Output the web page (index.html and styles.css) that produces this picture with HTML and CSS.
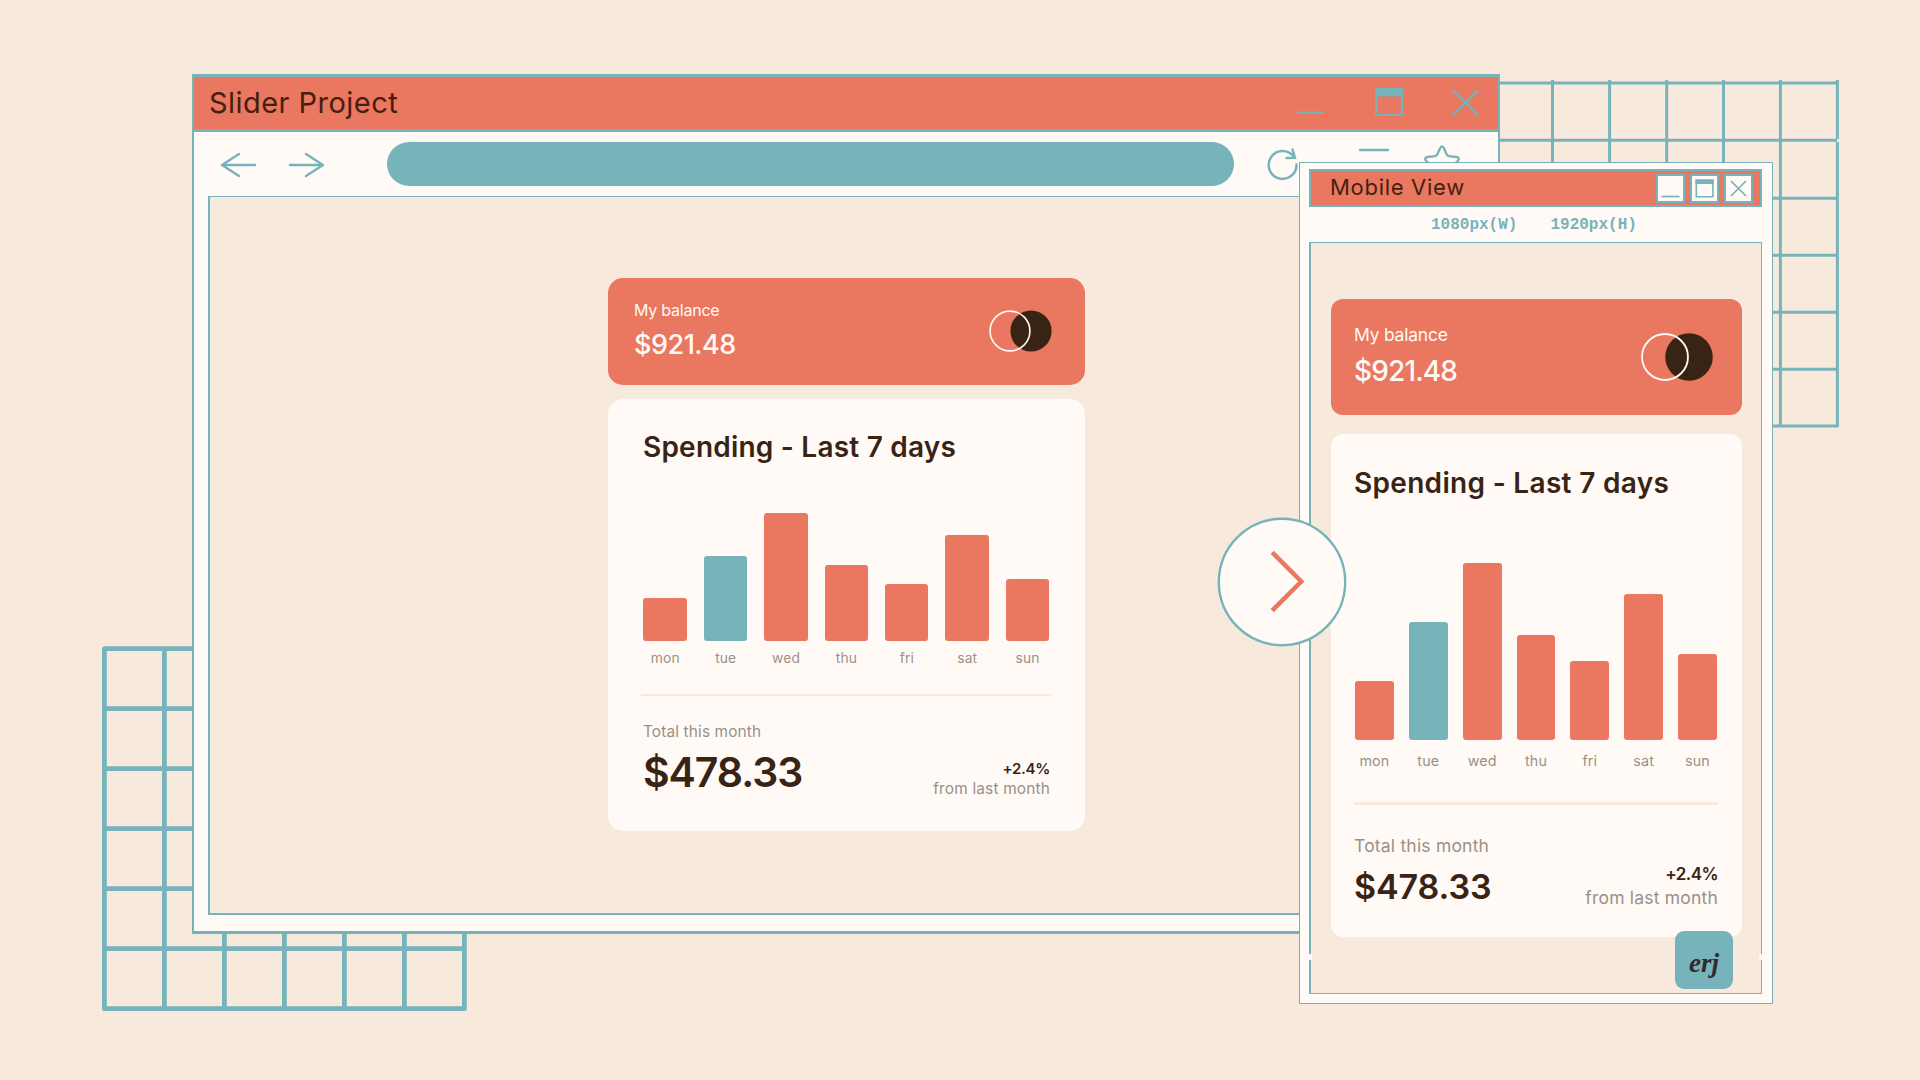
FILE: index.html
```html
<!DOCTYPE html>
<html lang="en">
<head>
<meta charset="utf-8">
<title>Slider Project</title>
<link rel="stylesheet" href="styles.css">
</head>
<body>
<main class="desktop">

  <svg class="grid grid--left" width="366" height="366" viewBox="0 0 366 366" fill="none" stroke="currentColor" stroke-width="4.8">
    <rect x="2.4" y="2.7" width="360" height="360" rx=".5"/>
    <path d="M62.4 2.4V362M122.4 2.4V362M182.4 2.4V362M242.4 2.4V362M302.4 2.4V362M2.4 62.7H362M2.4 122.7H362M2.4 182.7H362M2.4 242.7H362M2.4 302.7H362"/>
  </svg>

  <svg class="grid grid--right" width="350" height="350" viewBox="0 0 350 350" fill="none" stroke="currentColor" stroke-width="3">
    <path d="M0 3H347M0 60.3H347M0 118.3H347M0 175.3H347M0 232.3H347M0 289.3H347M0 346H348.5"/>
    <path d="M62.5 0V346M119.6 0V346M176.7 0V346M233.5 0V346M290.4 0V346M347.4 0V59M347.4 62V346"/>
  </svg>

  <section class="browser">
    <header class="browser__title">
      <h1 class="browser__name">Slider Project</h1>
      <div class="browser__controls">
        <svg width="27" height="30" viewBox="0 0 27 30"><path d="M0 24.7H27" stroke-width="2.5"/></svg>
        <svg width="28" height="30" viewBox="0 0 28 30"><path d="M1.1 1H26.9V27H1.1Z" stroke-width="2.2"/><path d="M0 0H28V8.5H0Z" fill="currentColor" stroke="none"/></svg>
        <svg width="27" height="30" viewBox="0 0 27 30"><path d="M.8 2.3L26 27M26 2.3L.8 27" stroke-width="2.2"/></svg>
      </div>
    </header>
    <nav class="browser__bar">
      <svg class="browser__back" width="37" height="26" viewBox="0 0 37 26"><path d="M2 13H35M19 2L2 13L19 24" stroke-width="2.4" stroke-linecap="round" stroke-linejoin="round"/></svg>
      <svg class="browser__forward" width="37" height="26" viewBox="0 0 37 26"><path d="M35 13H2M18 2L35 13L18 24" stroke-width="2.4" stroke-linecap="round" stroke-linejoin="round"/></svg>
      <div class="browser__address"></div>
      <svg class="browser__reload" width="34" height="36" viewBox="0 0 34 36"><path d="M29.5 17.5A13.9 14 0 1 1 27 9.9M25.500 2.500L27.900 10.700L19.500 11" stroke-width="2.5" stroke-linecap="round"/></svg>
      <svg class="browser__menu" width="30" height="36" viewBox="0 0 30 36"><path d="M1 4H29M1 18.500H29M1 33H29" stroke-width="2.500" stroke-linecap="round"/></svg>
      <svg class="browser__star" width="38" height="36" viewBox="0 0 38 36"><path d="M16.900 3.500Q19 -.6 21.100 3.500L23.500 9Q24.300 10.800 26.200 11.200L33.300 12Q37.600 12.800 34.700 16.200L28.600 21.500L30.500 30Q31 34 27 32.500L19 28L11 32.500Q7 34 7.500 30L9.400 21.500L3.300 16.200Q.4 12.800 4.700 12L11.800 11.200Q13.700 10.800 14.500 9Z" stroke-width="2.300" stroke-linejoin="round"/></svg>
    </nav>
    <div class="browser__view">
      <div class="wallet">
        <section class="balance">
          <div>
            <p class="balance__label">My balance</p>
            <p class="balance__value">$921.48</p>
          </div>
          <svg class="balance__logo" viewBox="0 0 63 42"><circle cx="42" cy="21" r="20.600" fill="#382314" stroke="none"/><circle cx="21" cy="21" r="19.900" fill="none" stroke="#fffaf5" stroke-width="1.600"/></svg>
        </section>
        <section class="spending">
          <h2 class="spending__heading">Spending - Last 7 days</h2>
          <div class="chart">
            <div class="chart__bar" style="height:42.700px"></div>
            <div class="chart__bar chart__bar--today" style="height:85.500px"></div>
            <div class="chart__bar" style="height:128px"></div>
            <div class="chart__bar" style="height:76px"></div>
            <div class="chart__bar" style="height:57.300px"></div>
            <div class="chart__bar" style="height:105.700px"></div>
            <div class="chart__bar" style="height:62.300px"></div>
          </div>
          <div class="days"><span>mon</span><span>tue</span><span>wed</span><span>thu</span><span>fri</span><span>sat</span><span>sun</span></div>
          <hr class="spending__rule">
          <p class="spending__label">Total this month</p>
          <div class="summary">
            <p class="summary__total">$478.33</p>
            <div class="summary__change">
              <p class="summary__percent">+2.4%</p>
              <p class="summary__note">from last month</p>
            </div>
          </div>
        </section>
      </div>
    </div>
  </section>

  <section class="phone">
    <header class="phone__title">
      <h2 class="phone__name">Mobile View</h2>
      <div class="phone__controls">
        <span class="phone__button"><svg width="25" height="25" viewBox="0 0 25 25"><path d="M3.500 20.500H21.500" stroke-width="1.700"/></svg></span>
        <span class="phone__button"><svg width="25" height="25" viewBox="0 0 25 25"><path d="M4.300 4.300H20.900V20.700H4.300Z" stroke-width="1.600"/><path d="M3.500 3.500H21.700V8H3.500Z" fill="currentColor" stroke="none"/></svg></span>
        <span class="phone__button"><svg width="25" height="25" viewBox="0 0 25 25"><path d="M5 5L20 20M20 5L5 20" stroke-width="1.700"/></svg></span>
      </div>
    </header>
    <div class="phone__size"><span>1080px(W)</span><span>1920px(H)</span></div>
    <div class="phone__view">
      <div class="wallet wallet--mobile">
        <section class="balance">
          <div>
            <p class="balance__label">My balance</p>
            <p class="balance__value">$921.48</p>
          </div>
          <svg class="balance__logo" viewBox="0 0 63 42"><circle cx="42" cy="21" r="20.800" fill="#382314" stroke="none"/><circle cx="21" cy="21" r="20.100" fill="none" stroke="#fffaf5" stroke-width="1.600"/></svg>
        </section>
        <section class="spending">
          <h2 class="spending__heading">Spending - Last 7 days</h2>
          <div class="chart">
            <div class="chart__bar" style="height:59px"></div>
            <div class="chart__bar chart__bar--today" style="height:118.300px"></div>
            <div class="chart__bar" style="height:177.300px"></div>
            <div class="chart__bar" style="height:105.300px"></div>
            <div class="chart__bar" style="height:79.300px"></div>
            <div class="chart__bar" style="height:146.300px"></div>
            <div class="chart__bar" style="height:86.300px"></div>
          </div>
          <div class="days"><span>mon</span><span>tue</span><span>wed</span><span>thu</span><span>fri</span><span>sat</span><span>sun</span></div>
          <hr class="spending__rule">
          <p class="spending__label">Total this month</p>
          <div class="summary">
            <p class="summary__total">$478.33</p>
            <div class="summary__change">
              <p class="summary__percent">+2.4%</p>
              <p class="summary__note">from last month</p>
            </div>
          </div>
        </section>
      </div>
      <i class="phone__notch phone__notch--left"></i>
      <i class="phone__notch phone__notch--right"></i>
      <div class="signature">erj</div>
    </div>
  </section>

  <button class="next" aria-label="Next">
    <svg width="36" height="66" viewBox="0 0 36 66"><path d="M2.200 3.300L31.300 32.500L2.200 61.700" stroke="#ea775f" stroke-width="4.500"/></svg>
  </button>

</main>
</body>
</html>
```
FILE: styles.css
```css
:root {
  --sand: #f7e9dc;
  --coral: #ea775f;
  --teal: #77b3bb;
  --cream: #fffaf5;
  --brown: #382314;
  --muted: #9b9088;
}

* {
  box-sizing: border-box;
}

body,
h1,
h2,
p,
hr {
  margin: 0;
}

body {
  background: var(--sand);
  font-family: Inter, "Liberation Sans", sans-serif;
  color: var(--brown);
}

svg {
  display: block;
  flex: none;
  fill: none;
  stroke: currentColor;
}

.desktop {
  position: relative;
  width: 1920px;
  height: 1080px;
  overflow: hidden;
  color: var(--teal);
}

.grid {
  position: absolute;
}

.grid--left {
  left: 102px;
  top: 646px;
}

.grid--right {
  left: 1490px;
  top: 80px;
}

/* Browser window */

.browser {
  position: absolute;
  left: 192px;
  top: 74px;
  width: 1308px;
  height: 860px;
  display: flex;
  flex-direction: column;
  padding-bottom: 16px;
  border: 2px solid var(--teal);
  border-top-width: 3px;
  border-bottom-width: 3px;
  background: var(--cream);
}

.browser__title {
  display: flex;
  justify-content: space-between;
  align-items: center;
  height: 55px;
  padding: 0 19.500px 0 15px;
  border-bottom: 3px solid var(--teal);
  background: var(--coral);
}

.browser__name {
  font-size: 29px;
  line-height: 52px;
  font-weight: 400;
  letter-spacing: 0.460px;
  color: #45200f;
}

.browser__controls {
  display: flex;
  gap: 50px;
}

.browser__controls svg:nth-child(2) {
  margin: 0 -1px 0 1px;
}

.browser__bar {
  display: flex;
  height: 64px;
  padding-left: 26px;
}

.browser__back,
.browser__forward {
  margin-top: 20px;
}

.browser__forward {
  margin-left: 31px;
}

.browser__address {
  width: 847px;
  height: 44px;
  margin: 10px 33px 0 62px;
  border-radius: 22px;
  background: var(--teal);
}

.browser__reload {
  margin-top: 15px;
}

.browser__menu {
  margin: 14px 0 0 58px;
}

.browser__star {
  margin: 13px 0 0 34px;
}

.browser__view {
  flex: 1;
  margin: 0 14px;
  padding: 81px 0 0 398px;
  border: 2px solid var(--teal);
  border-top-width: 1px;
  background: var(--sand);
}

/* Wallet cards */

.wallet {
  width: 477px;
  display: flex;
  flex-direction: column;
  gap: 14px;
  --radius: 15px;
}

.balance {
  display: flex;
  justify-content: space-between;
  height: 107px;
  padding: 22px 33px 0 26px;
  border-radius: var(--radius);
  background: var(--coral);
  color: var(--cream);
}

.balance__label {
  font-size: 16px;
  line-height: 20px;
  letter-spacing: -0.230px;
}

.balance__value {
  margin-top: 9px;
  font-size: 27px;
  line-height: 32px;
  font-weight: 500;
  letter-spacing: -0.480px;
}

.balance__logo {
  width: 63px;
  height: 42px;
  margin-top: 10px;
}

.spending {
  height: 432px;
  padding: 31px 35px 0;
  border-radius: var(--radius);
  background: var(--cream);
  color: var(--brown);
}

.spending__heading {
  font-size: 28px;
  line-height: 34px;
  font-weight: 600;
  letter-spacing: 0.220px;
}

.chart {
  display: flex;
  align-items: flex-end;
  justify-content: space-between;
  height: 177px;
  margin: 0 0.700px 0 0.300px;
}

.chart__bar {
  width: 43.500px;
  border-radius: 3px;
  background: var(--coral);
}

.chart__bar--today {
  background: var(--teal);
}

.days {
  display: flex;
  justify-content: space-between;
  margin: 8px 0.500px 0;
  font-size: 13.800px;
  line-height: 18px;
  letter-spacing: 0.150px;
  color: var(--muted);
}

.days span {
  width: 43.700px;
  text-align: center;
}

.spending__rule {
  height: 2px;
  margin: 27px -1px 0 -2px;
  border: 0;
  background: #f8e9de;
}

.spending__label {
  margin-top: 26px;
  font-size: 15.400px;
  line-height: 20px;
  letter-spacing: 0.140px;
  color: var(--muted);
}

.summary {
  display: flex;
  justify-content: space-between;
  margin-top: 6px;
}

.summary__total {
  font-size: 41px;
  line-height: 48px;
  font-weight: 600;
  letter-spacing: -1.050px;
}

.summary__change {
  margin-top: 11px;
  font-size: 15px;
  line-height: 20px;
  text-align: right;
}

.summary__percent {
  font-weight: 600;
  letter-spacing: -0.280px;
}

.summary__note {
  font-size: 15.400px;
  letter-spacing: 0.180px;
  color: var(--muted);
}

/* Taller proportions used inside the phone frame */

.wallet--mobile {
  width: 411px;
  gap: 19px;
  --radius: 12px;
}

.wallet--mobile .balance {
  height: 116px;
  padding: 25px 29px 0 23px;
}

.wallet--mobile .balance__label {
  font-size: 17.500px;
  line-height: 22px;
}

.wallet--mobile .balance__value {
  margin-top: 8px;
  font-size: 28px;
  line-height: 34px;
  letter-spacing: -0.860px;
}

.wallet--mobile .balance__logo {
  width: 72px;
  height: 48px;
  margin-top: 9px;
}

.wallet--mobile .spending {
  height: 503px;
  padding: 32px 24px 0 23px;
}

.wallet--mobile .spending__heading {
  letter-spacing: 0.310px;
}

.wallet--mobile .chart {
  height: 240px;
  margin: 0 1px 0 1px;
}

.wallet--mobile .chart__bar,
.wallet--mobile .days span {
  width: 38.900px;
}

.wallet--mobile .days {
  margin: 12px 1px 0 1px;
  font-size: 14.300px;
}

.wallet--mobile .spending__rule {
  height: 3px;
  margin: 32px 0 0;
}

.wallet--mobile .spending__label {
  margin-top: 30px;
  font-size: 17.500px;
  line-height: 22px;
  letter-spacing: 0.200px;
}

.wallet--mobile .summary {
  margin-top: 5px;
}

.wallet--mobile .summary__total {
  margin-top: 5px;
  font-size: 34px;
  line-height: 40px;
  letter-spacing: -0.090px;
}

.wallet--mobile .summary__change {
  margin-top: 1px;
  font-size: 17px;
  line-height: 23px;
}

.wallet--mobile .summary__percent {
  letter-spacing: -0.550px;
}

.wallet--mobile .summary__note {
  font-size: 17.500px;
  letter-spacing: 0.200px;
}

/* Phone window */

.phone {
  position: absolute;
  left: 1299px;
  top: 162px;
  width: 474px;
  height: 842px;
  display: flex;
  flex-direction: column;
  padding: 6px 10px 9px 9px;
  border: 1px solid var(--teal);
  background: var(--cream);
}

.phone__title {
  display: flex;
  justify-content: space-between;
  height: 38px;
  padding: 3px 7px 0 19px;
  border: 2px solid var(--teal);
  background: var(--coral);
}

.phone__name {
  font-size: 22px;
  line-height: 27px;
  font-weight: 400;
  letter-spacing: 0.700px;
  color: #45200f;
}

.phone__controls {
  display: flex;
  gap: 5px;
}

.phone__button {
  width: 29px;
  height: 29px;
  border: 2px solid var(--teal);
  background: var(--cream);
}

.phone__size {
  display: flex;
  gap: 33px;
  height: 35px;
  padding-left: 122px;
  font: bold 16px/37px "Liberation Mono", "Courier New", monospace;
}

.phone__view {
  position: relative;
  flex: 1;
  padding: 56px 0 0 20px;
  border: 1px solid var(--teal);
  border-left-width: 2px;
  background: var(--sand);
}

.phone__notch {
  position: absolute;
  top: 711px;
  width: 3px;
  height: 6px;
  background: var(--cream);
}

.phone__notch--left {
  left: -2px;
}

.phone__notch--right {
  right: -1px;
}

.signature {
  position: absolute;
  left: 364px;
  top: 688px;
  width: 58px;
  height: 58px;
  border-radius: 9px;
  background: var(--teal);
  color: #33282a;
  font: italic bold 27px/64px "Liberation Serif", "Times New Roman", serif;
  text-align: center;
}

.next {
  position: absolute;
  left: 1218px;
  top: 518px;
  width: 128px;
  height: 128px;
  padding: 0 0 0 49.500px;
  border: 2.500px solid var(--teal);
  border-radius: 50%;
  background: var(--cream);
  box-shadow: 0 0 0 0.400px var(--teal);
}
```
